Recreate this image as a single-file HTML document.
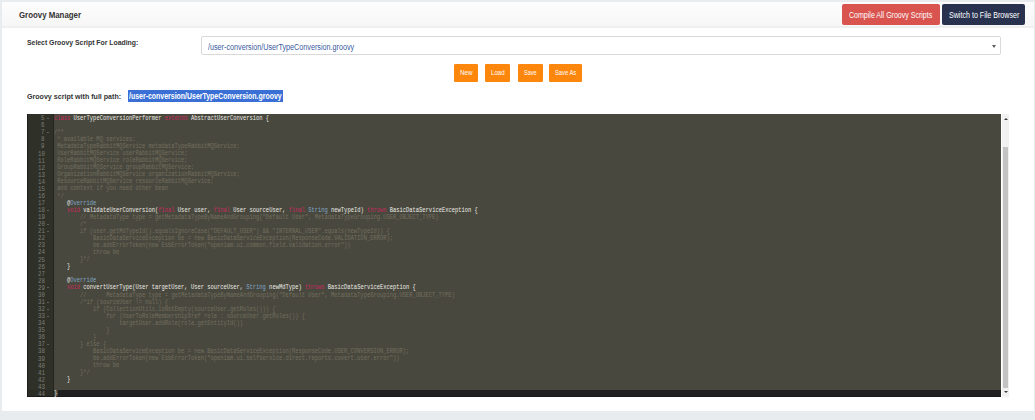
<!DOCTYPE html>
<html><head><meta charset="utf-8"><title>Groovy Manager</title>
<style>
*{box-sizing:border-box;margin:0;padding:0}
html,body{width:1035px;height:420px;overflow:hidden;background:#e9ecef;font-family:"Liberation Sans",sans-serif}
.panel{position:absolute;left:2px;top:2px;width:1031.8px;height:409.1px;background:#fff}
.hdr{position:absolute;left:0;top:0;width:100%;height:26px;background:linear-gradient(#fdfdfd,#f6f6f6);border-bottom:2px solid #efefef}
.t{position:absolute;white-space:nowrap;transform-origin:0 0;line-height:10px}
.title{left:16.6px;top:7.6px;font-size:8.4px;font-weight:bold;color:#333}
.btn{position:absolute;border-radius:2px;color:#fff}
.btn span{position:absolute;white-space:nowrap;transform-origin:0 0;line-height:10px}
.red{left:840px;top:2.3px;width:98px;height:20.8px;background:#d9534f}
.navy{left:939.5px;top:2.3px;width:83.9px;height:20.8px;background:#28324f}
.lbl{font-size:8.3px;font-weight:bold;color:#333}
.sel{position:absolute;left:199px;top:34.3px;width:800.2px;height:18.8px;border:1px solid #d9d9d9;border-radius:2px;background:#fff}
.seltxt{font-size:8.3px;color:#3a5aa0}
.arr{position:absolute;left:790.4px;top:7.7px;width:0;height:0;border-left:2.2px solid transparent;border-right:2.2px solid transparent;border-top:3px solid #5c5c5c}
.obtn{position:absolute;top:62px;height:17.6px;background:#fd860c;border-radius:1.2px}
.obtn span{position:absolute;white-space:nowrap;transform-origin:0 0;line-height:10px;font-size:7px;color:#fff}
.hl{position:absolute;left:126.2px;top:88.4px;width:154.4px;height:11.5px;background:#3a6fd6}
.hltxt{font-size:8.3px;font-weight:bold;color:#fff}
.ed{position:absolute;left:25px;top:112px;width:974px;height:282.5px;background:#49483e;overflow:hidden}
.gut{position:absolute;left:0;top:0;width:26.74px;height:100%;background:#2f3129;border-left:1px solid #1c1d19;border-right:1.2px solid #25261f}
.gn{position:absolute;left:0;width:26px;height:7.07px;line-height:7.07px;font-family:"Liberation Mono",monospace;font-size:7.4px;color:#7d7e76;margin-top:1.3px}
.gn b{position:absolute;right:8.4px;top:0;font-weight:normal;transform:scaleX(0.78);transform-origin:100% 0}
.fw{position:absolute;left:19.9px;top:2.6px;width:0;height:0;border-left:1.3px solid transparent;border-right:1.3px solid transparent;border-top:1.7px solid #8a8b85}
.code{position:absolute;left:26.74px;top:0.9px;width:1400px;height:100%;transform:scaleX(0.7065);transform-origin:0 0}
.ln{position:absolute;left:0;right:0;height:7.07px;line-height:7.07px;font-family:"Liberation Mono",monospace;font-size:7.7px;white-space:pre;color:#ecece6}
.ln .k{color:#c6285d}.ln .s{color:#7fa9c9}.ln .c{color:#736f5e}.ln .a{color:#d8d8d4}
.act{position:absolute;left:26.74px;right:0;top:275.6px;height:7.07px;background:#202020}
.actg{position:absolute;left:1px;width:25px;top:275.6px;height:7.07px;background:#2c2d26}
.sel44{position:absolute;left:26.74px;width:4.2px;top:275.6px;height:6.2px;background:#49483e}
.edb{position:absolute;left:0;right:0;bottom:0;height:0.8px;background:#1a1a1a}
.sb{position:absolute;left:1000.1px;top:111.7px;width:7px;height:283.2px;background:#f1f1f1}
.thumb{position:absolute;left:0.9px;top:33.5px;width:5.4px;height:240.4px;background:#c3c3c3}
.sbu{position:absolute;left:1.8px;top:4.5px;width:0;height:0;border-left:2.1px solid transparent;border-right:2.1px solid transparent;border-bottom:2.4px solid #3a3a3a}
.sbd{position:absolute;left:1.6px;top:277.8px;width:0;height:0;border-left:2.1px solid transparent;border-right:2.1px solid transparent;border-top:2.4px solid #3a3a3a}
</style></head><body>
<div class="panel">
  <div class="hdr">
    <div class="t title" id="title" style="transform:scaleX(0.938)">Groovy Manager</div>
    <div class="btn red"><span id="rtxt" style="left:7.1px;top:6.4px;font-size:8.2px;transform:scaleX(0.859)">Compile All Groovy Scripts</span></div>
    <div class="btn navy"><span id="ntxt" style="left:7.2px;top:6.4px;font-size:8.2px;transform:scaleX(0.868)">Switch to File Browser</span></div>
  </div>
  <div class="t lbl" id="lbl1" style="left:24.9px;top:35.9px;font-size:8px;transform:scaleX(0.857)">Select Groovy Script For Loading:</div>
  <div class="sel"><span class="t seltxt" id="seltxt" style="left:6.2px;top:4.5px;transform:scaleX(0.8685)">/user-conversion/UserTypeConversion.groovy</span><i class="arr"></i></div>
  <div class="obtn" style="left:452.1px;width:24px"><span id="b1" style="left:5.8px;top:3.8px;transform:scaleX(0.894)">New</span></div>
  <div class="obtn" style="left:483px;width:25.2px"><span id="b2" style="left:5.8px;top:3.8px;transform:scaleX(0.881)">Load</span></div>
  <div class="obtn" style="left:515.5px;width:25.2px"><span id="b3" style="left:6.3px;top:3.8px;transform:scaleX(0.794)">Save</span></div>
  <div class="obtn" style="left:547.3px;width:32.6px"><span id="b4" style="left:5.8px;top:3.8px;transform:scaleX(0.825)">Save As</span></div>
  <div class="t lbl" id="lbl2" style="left:24.6px;top:89.9px;font-size:8px;transform:scaleX(0.886)">Groovy script with full path:</div>
  <div class="hl"><span class="t hltxt" id="hltxt" style="left:1px;top:1px;transform:scaleX(0.839)">/user-conversion/UserTypeConversion.groovy</span></div>
  <div class="ed">
    <div class="gut"></div>
    <div class="actg"></div>
    <div class="act"></div><div class="sel44"></div><div class="edb"></div>
    <div class="gutn">
<div class="gn" style="top:-0.13px"><b>5</b><i class="fw"></i></div>
<div class="gn" style="top:6.94px"><b>6</b></div>
<div class="gn" style="top:14.01px"><b>7</b><i class="fw"></i></div>
<div class="gn" style="top:21.08px"><b>8</b></div>
<div class="gn" style="top:28.15px"><b>9</b></div>
<div class="gn" style="top:35.22px"><b>10</b></div>
<div class="gn" style="top:42.29px"><b>11</b></div>
<div class="gn" style="top:49.36px"><b>12</b></div>
<div class="gn" style="top:56.43px"><b>13</b></div>
<div class="gn" style="top:63.50px"><b>14</b></div>
<div class="gn" style="top:70.57px"><b>15</b></div>
<div class="gn" style="top:77.64px"><b>16</b></div>
<div class="gn" style="top:84.71px"><b>17</b></div>
<div class="gn" style="top:91.78px"><b>18</b><i class="fw"></i></div>
<div class="gn" style="top:98.85px"><b>19</b></div>
<div class="gn" style="top:105.92px"><b>20</b><i class="fw"></i></div>
<div class="gn" style="top:112.99px"><b>21</b><i class="fw"></i></div>
<div class="gn" style="top:120.06px"><b>22</b></div>
<div class="gn" style="top:127.13px"><b>23</b></div>
<div class="gn" style="top:134.20px"><b>24</b></div>
<div class="gn" style="top:141.27px"><b>25</b></div>
<div class="gn" style="top:148.34px"><b>26</b></div>
<div class="gn" style="top:155.41px"><b>27</b></div>
<div class="gn" style="top:162.48px"><b>28</b></div>
<div class="gn" style="top:169.55px"><b>29</b><i class="fw"></i></div>
<div class="gn" style="top:176.62px"><b>30</b></div>
<div class="gn" style="top:183.69px"><b>31</b><i class="fw"></i></div>
<div class="gn" style="top:190.76px"><b>32</b><i class="fw"></i></div>
<div class="gn" style="top:197.83px"><b>33</b><i class="fw"></i></div>
<div class="gn" style="top:204.90px"><b>34</b></div>
<div class="gn" style="top:211.97px"><b>35</b></div>
<div class="gn" style="top:219.04px"><b>36</b></div>
<div class="gn" style="top:226.11px"><b>37</b><i class="fw"></i></div>
<div class="gn" style="top:233.18px"><b>38</b></div>
<div class="gn" style="top:240.25px"><b>39</b></div>
<div class="gn" style="top:247.32px"><b>40</b></div>
<div class="gn" style="top:254.39px"><b>41</b></div>
<div class="gn" style="top:261.46px"><b>42</b></div>
<div class="gn" style="top:268.53px"><b>43</b></div>
<div class="gn" style="top:275.60px"><b>44</b></div>
    </div>
    <div class="code">
<div class="ln" style="top:-0.13px"><span class="k">class</span><span class="x"> UserTypeConversionPerformer </span><span class="k">extends</span><span class="x"> AbstractUserConversion {</span></div>
<div class="ln" style="top:6.94px"></div>
<div class="ln" style="top:14.01px"><span class="c">/**</span></div>
<div class="ln" style="top:21.08px"><span class="c"> * available MQ services:</span></div>
<div class="ln" style="top:28.15px"><span class="c"> MetadataTypeRabbitMQService metadataTypeRabbitMQService;</span></div>
<div class="ln" style="top:35.22px"><span class="c"> UserRabbitMQService userRabbitMQService;</span></div>
<div class="ln" style="top:42.29px"><span class="c"> RoleRabbitMQService roleRabbitMQService;</span></div>
<div class="ln" style="top:49.36px"><span class="c"> GroupRabbitMQService groupRabbitMQService;</span></div>
<div class="ln" style="top:56.43px"><span class="c"> OrganizationRabbitMQService organizationRabbitMQService;</span></div>
<div class="ln" style="top:63.50px"><span class="c"> ResourceRabbitMQService resourceRabbitMQService;</span></div>
<div class="ln" style="top:70.57px"><span class="c"> and context if you need other bean</span></div>
<div class="ln" style="top:77.64px"><span class="c"> */</span></div>
<div class="ln" style="top:84.71px"><span class="x">    </span><span class="a">@</span><span class="s">Override</span></div>
<div class="ln" style="top:91.78px"><span class="x">    </span><span class="k">void</span><span class="x"> validateUserConversion(</span><span class="k">final</span><span class="x"> User user, </span><span class="k">final</span><span class="x"> User sourceUser, </span><span class="k">final</span><span class="x"> </span><span class="s">String</span><span class="x"> newTypeId) </span><span class="k">throws</span><span class="x"> BasicDataServiceException {</span></div>
<div class="ln" style="top:98.85px"><span class="c">        // MetadataType type = getMetadataTypeByNameAndGrouping(&quot;Default User&quot;, MetadataTypeGrouping.USER_OBJECT_TYPE)</span></div>
<div class="ln" style="top:105.92px"><span class="c">        /*</span></div>
<div class="ln" style="top:112.99px"><span class="c">        if (user.getMdTypeId().equalsIgnoreCase(&quot;DEFAULT_USER&quot;) &amp;&amp; &quot;INTERNAL_USER&quot;.equals(newTypeId)) {</span></div>
<div class="ln" style="top:120.06px"><span class="c">            BasicDataServiceException be = new BasicDataServiceException(ResponseCode.VALIDATION_ERROR);</span></div>
<div class="ln" style="top:127.13px"><span class="c">            be.addErrorToken(new EsbErrorToken(&quot;openiam.ui.common.field.validation.error&quot;))</span></div>
<div class="ln" style="top:134.20px"><span class="c">            throw be</span></div>
<div class="ln" style="top:141.27px"><span class="c">        }*/</span></div>
<div class="ln" style="top:148.34px"><span class="x">    }</span></div>
<div class="ln" style="top:155.41px"></div>
<div class="ln" style="top:162.48px"><span class="x">    </span><span class="a">@</span><span class="s">Override</span></div>
<div class="ln" style="top:169.55px"><span class="x">    </span><span class="k">void</span><span class="x"> convertUserType(User targetUser, User sourceUser, </span><span class="s">String</span><span class="x"> newMdType) </span><span class="k">throws</span><span class="x"> BasicDataServiceException {</span></div>
<div class="ln" style="top:176.62px"><span class="c">        //      MetadataType type = getMetadataTypeByNameAndGrouping(&quot;Default User&quot;, MetadataTypeGrouping.USER_OBJECT_TYPE)</span></div>
<div class="ln" style="top:183.69px"><span class="c">        /*if (sourceUser != null) {</span></div>
<div class="ln" style="top:190.76px"><span class="c">            if (CollectionUtils.isNotEmpty(sourceUser.getRoles())) {</span></div>
<div class="ln" style="top:197.83px"><span class="c">                for (UserToRoleMembershipXref role : sourceUser.getRoles()) {</span></div>
<div class="ln" style="top:204.90px"><span class="c">                    targetUser.addRole(role.getEntityId())</span></div>
<div class="ln" style="top:211.97px"><span class="c">                }</span></div>
<div class="ln" style="top:219.04px"><span class="c">            }</span></div>
<div class="ln" style="top:226.11px"><span class="c">        } else {</span></div>
<div class="ln" style="top:233.18px"><span class="c">            BasicDataServiceException be = new BasicDataServiceException(ResponseCode.USER_CONVERSION_ERROR);</span></div>
<div class="ln" style="top:240.25px"><span class="c">            be.addErrorToken(new EsbErrorToken(&quot;openiam.ui.selfservice.direct.reports.covert.user.error&quot;))</span></div>
<div class="ln" style="top:247.32px"><span class="c">            throw be</span></div>
<div class="ln" style="top:254.39px"><span class="c">        }*/</span></div>
<div class="ln" style="top:261.46px"><span class="x">    }</span></div>
<div class="ln" style="top:268.53px"></div>
<div class="ln" style="top:275.60px"><span class="x">}</span></div>
    </div>
  </div>
  <div class="sb"><i class="sbu"></i><div class="thumb"></div><i class="sbd"></i></div>
</div>
</body></html>
